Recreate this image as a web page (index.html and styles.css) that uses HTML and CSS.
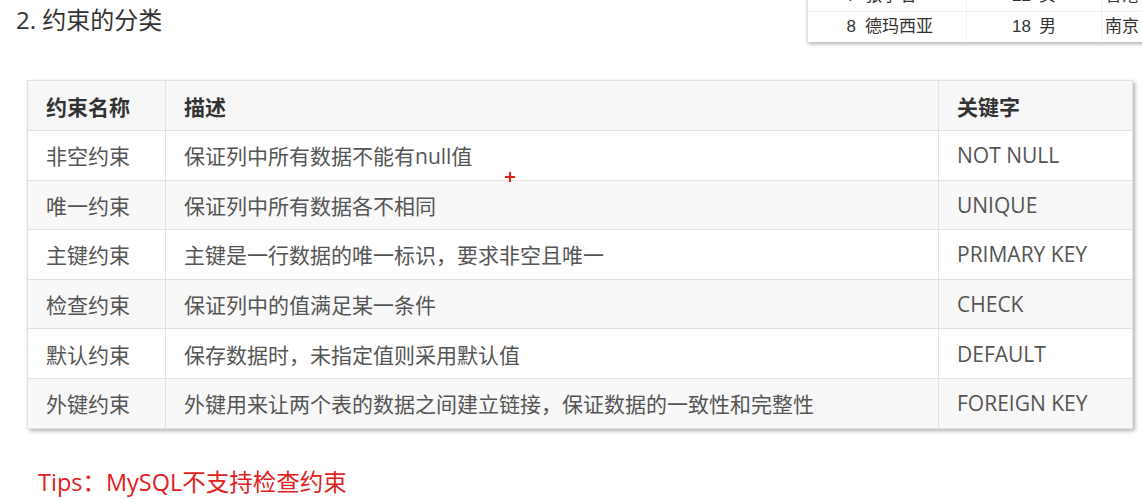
FILE: index.html
```html
<!DOCTYPE html>
<html lang="zh-CN">
<head>
    <meta charset="UTF-8">
    <title>约束的分类</title>
    <link rel="stylesheet" href="styles.css">
</head>
<body>

    <div class="page">
        <h2 class="title">2. 约束的分类</h2>

        <table class="constraints">
            <thead>
                <tr>
                    <th class="col-name">约束名称</th>
                    <th class="col-desc">描述</th>
                    <th class="col-key">关键字</th>
                </tr>
            </thead>
            <tbody>
                <tr>
                    <td>非空约束</td>
                    <td>保证列中所有数据不能有null值</td>
                    <td>NOT NULL</td>
                </tr>
                <tr>
                    <td>唯一约束</td>
                    <td>保证列中所有数据各不相同</td>
                    <td>UNIQUE</td>
                </tr>
                <tr>
                    <td>主键约束</td>
                    <td>主键是一行数据的唯一标识，要求非空且唯一</td>
                    <td>PRIMARY KEY</td>
                </tr>
                <tr>
                    <td>检查约束</td>
                    <td>保证列中的值满足某一条件</td>
                    <td>CHECK</td>
                </tr>
                <tr>
                    <td>默认约束</td>
                    <td>保存数据时，未指定值则采用默认值</td>
                    <td>DEFAULT</td>
                </tr>
                <tr>
                    <td>外键约束</td>
                    <td>外键用来让两个表的数据之间建立链接，保证数据的一致性和完整性</td>
                    <td>FOREIGN KEY</td>
                </tr>
            </tbody>
        </table>

        <p class="tips">Tips：MySQL不支持检查约束</p>
    </div>

    <!-- result grid peeking in from the top right -->
    <div class="result-grid">
        <div class="grid-row">
            <span class="c-id">7</span>
            <span class="c-name">张学右</span>
            <span class="c-age">22</span>
            <span class="c-sex">女</span>
            <span class="c-city">香港</span>
        </div>
        <div class="grid-row">
            <span class="c-id">8</span>
            <span class="c-name">德玛西亚</span>
            <span class="c-age">18</span>
            <span class="c-sex">男</span>
            <span class="c-city">南京</span>
        </div>
    </div>

    <div class="cursor"></div>

</body>
</html>
```

FILE: styles.css
```css
body {
    margin: 0;
    background-color: #fff;
    font-family: "Open Sans", "Noto Sans CJK SC", sans-serif;
    color: #333;
    overflow: hidden;
}

.page {
    padding-left: 16px;
}

.title {
    margin: 0;
    font-size: 24px;
    font-weight: normal;
    line-height: 40px;
    color: #333;
}

.constraints {
    margin-top: 40px;
    margin-left: 11px;
    width: 1105px;
    border-collapse: collapse;
    table-layout: fixed;
    font-size: 21px;
    box-shadow: 2px 2px 4px rgba(0, 0, 0, 0.3);
}

.constraints th,
.constraints td {
    box-sizing: border-box;
    border: 1px solid #e2e2e2;
    padding: 0 0 0 18px;
    text-align: left;
    white-space: nowrap;
}

.constraints th {
    height: 50px;
    background-color: #f7f7f7;
    font-weight: bold;
    color: #333;
}

.constraints td {
    height: 49.6px;
    color: #555;
}

.constraints tbody tr:nth-child(even) td {
    background-color: #f8f8f8;
}

.col-name {
    width: 138px;
}

.col-desc {
    width: 773px;
}

.col-key {
    width: 194px;
}

.tips {
    margin: 38px 0 0 22px;
    font-size: 23.5px;
    line-height: 30px;
    color: #e3201c;
}

.result-grid {
    position: absolute;
    left: 808px;
    top: -20px;
    width: 345px;
    background-color: #fff;
    box-shadow: 0 2px 4px rgba(0, 0, 0, 0.3);
    font-family: "Liberation Sans", "Noto Sans CJK SC", sans-serif;
    font-size: 17px;
    color: #333;
}

.grid-row {
    display: flex;
    height: 30px;
    line-height: 30px;
    border-top: 1px solid #f0f0f0;
}

.grid-row span {
    box-sizing: border-box;
}

.c-id {
    width: 52px;
    padding-right: 4px;
    text-align: right;
}

.c-name {
    width: 107px;
    padding-left: 5px;
    border-right: 1px solid #f0f0f0;
}

.c-age {
    width: 68px;
    padding-right: 4px;
    text-align: right;
}

.c-sex {
    width: 67px;
    padding-left: 4px;
    border-right: 1px solid #f0f0f0;
}

.c-city {
    padding-left: 3px;
}

.cursor {
    position: absolute;
    left: 505px;
    top: 172px;
    width: 10px;
    height: 10px;
}

.cursor::before,
.cursor::after {
    content: "";
    position: absolute;
    background-color: #e3201c;
}

.cursor::before {
    left: 4px;
    top: 0;
    width: 2px;
    height: 10px;
}

.cursor::after {
    left: 0;
    top: 4px;
    width: 10px;
    height: 2px;
}
```
